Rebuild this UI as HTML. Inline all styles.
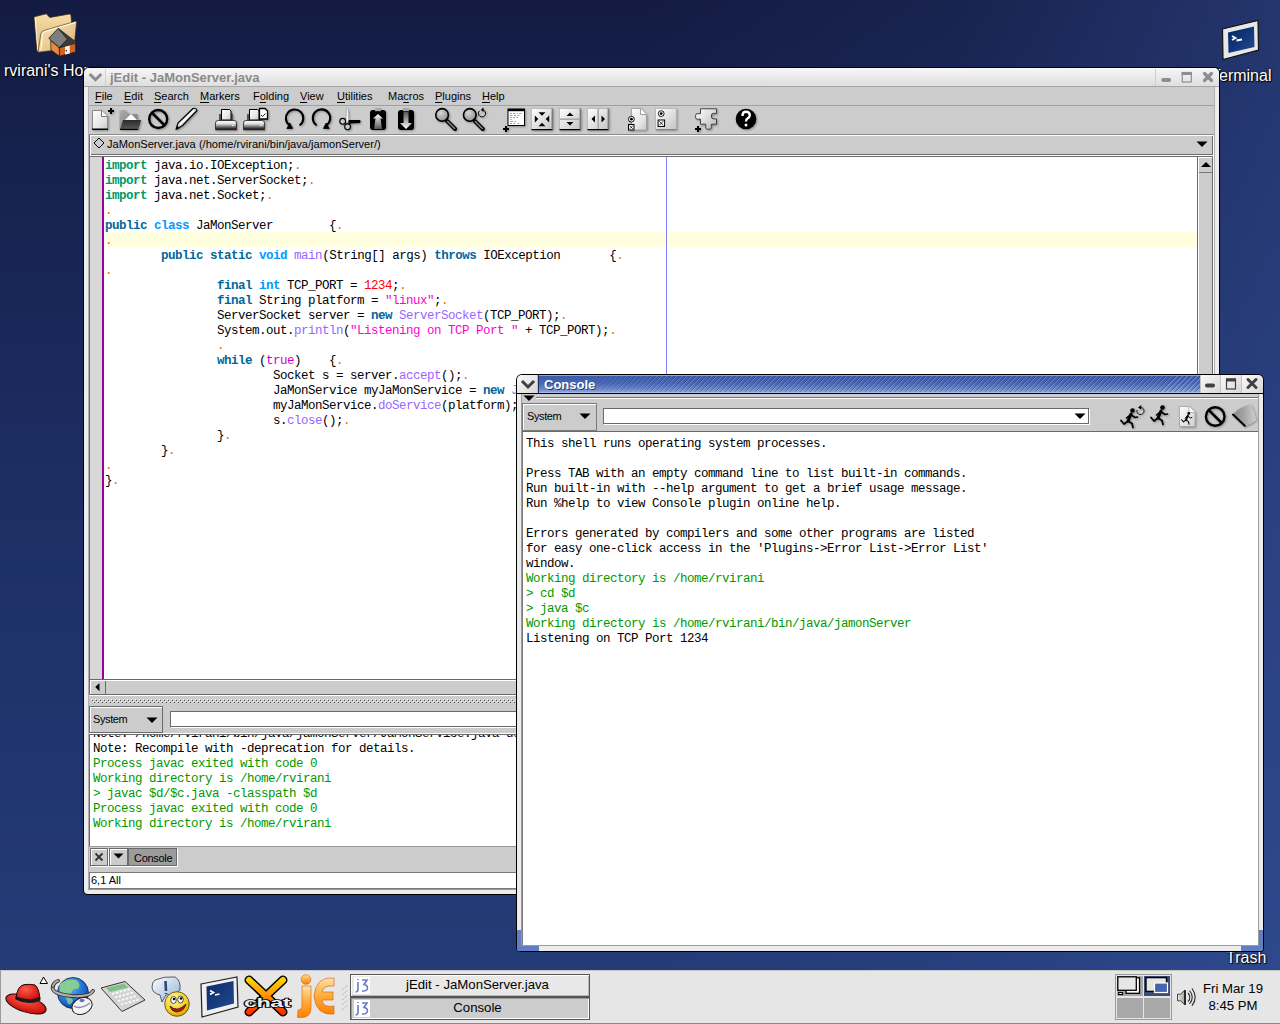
<!DOCTYPE html>
<html><head><meta charset="utf-8"><style>
*{box-sizing:border-box;margin:0;padding:0}
html,body{width:1280px;height:1024px;overflow:hidden}
body{position:relative;font-family:"Liberation Sans",sans-serif;background:linear-gradient(to right,rgba(60,90,170,0) 50%,rgba(60,90,170,0.12) 75%,rgba(60,90,170,0.42) 100%),linear-gradient(#131b42 0%,#1c2d62 45%,#253d7a 100%)}
.a{position:absolute}
.mono{position:absolute;font-family:"Liberation Mono",monospace;font-size:12.5px;letter-spacing:-0.5px;line-height:15px;white-space:pre;color:#000}
.dl{position:absolute;color:#fff;font-size:16px;line-height:18px;text-shadow:1px 1px 1px #000,0 0 2px #000;white-space:nowrap}
.ui{position:absolute;font-size:11px;color:#000;white-space:nowrap;line-height:14px}
.ui u{text-decoration:underline;text-underline-offset:2px}
.k1{color:#006699;font-weight:bold}
.k2{color:#009966;font-weight:bold}
.k3{color:#0099ff;font-weight:bold}
.fn{color:#9966ff}
.lit{color:#ff00cc}
.lit2{color:#cc00cc}
.dg{color:#ff0000}
.ws{color:#ff6600}
.gr{color:#009900}
svg{position:absolute;overflow:visible}
</style></head><body>
<div class="dl" style="left:4px;top:62px">rvirani's Home</div>
<div class="dl" style="left:1211px;top:67px">Terminal</div>
<div class="dl" style="left:1226px;top:949px;font-size:16px">Trash</div>
<svg style="left:0;top:0" width="1280" height="1024" viewBox="0 0 1280 1024"><defs><linearGradient id="gFold" x1="0" y1="0" x2="0" y2="1"><stop offset="0" stop-color="#f8dfa8"/><stop offset="1" stop-color="#d8b070"/></linearGradient><linearGradient id="gFold2" x1="0" y1="0" x2="1" y2="1"><stop offset="0" stop-color="#fbe6b8"/><stop offset="1" stop-color="#d9b276"/></linearGradient></defs><path d="M34 16.8 L46.3 13.8 L49.8 17.4 L69.5 14 Q70.8 14 71 15.5 L72 27 L40 52 Q37 53 36.8 50 Z" fill="url(#gFold)" stroke="#3a2a10" stroke-width="0.8" stroke-linejoin="round"/><path d="M35.2 18 L37.8 50.5" stroke="#fff" stroke-width="0.9" opacity="0.9"/><path d="M38 52.3 L40.8 34 Q41.2 31 44 30.5 L75.5 21.3 Q76.7 21.2 76.5 22.5 L74.5 42 L52 50.5 Z" fill="url(#gFold2)" stroke="#4a3410" stroke-width="0.6" stroke-linejoin="round"/><path d="M41 50 L42.5 34 Q43 32 45 31.6 L75.5 22.5" fill="none" stroke="#fff" stroke-width="1"/><path d="M50.6 40.6 L59.3 47.8 L59.5 56.2 L51 50 Z" fill="#e88a44" stroke="#2a1400" stroke-width="0.7" stroke-linejoin="round"/><path d="M59.3 47.8 L75.6 42 L75.6 52 L59.5 56.2 Z" fill="#cc6424" stroke="#2a1400" stroke-width="0.7" stroke-linejoin="round"/><path d="M58.3 28.3 L48.8 38.3 L59.3 47.6 L67.5 39.3 Z" fill="#7e7e7e" stroke="#1a1a1a" stroke-width="0.8" stroke-linejoin="round"/><path d="M58.3 28.3 L76.8 42.6 L75.6 43.4 L59.3 47.6 L67.5 39.3 Z" fill="#3a3a3a" stroke="#1a1a1a" stroke-width="0.6" stroke-linejoin="round"/><path d="M65 46.7 L69.8 45.6 L69.8 53.4 L65 54.6 Z" fill="#f0f0f0"/><circle cx="66.3" cy="50.8" r="0.7" fill="#000"/><g transform="translate(1222,20)"><path d="M0.5 9 L36 0.5 L36.5 30 L1 39.5 Z" fill="#e8e8e8" stroke="#111" stroke-width="1.2"/><path d="M6 12.5 L32 6.5 L32.5 27 L6.5 33 Z" fill="url(#gScr2)"/><path d="M10 16 L13.5 18 L10 20 M14.5 20.5 L20 19.5" stroke="#fff" stroke-width="1.8" fill="none"/></g><defs><linearGradient id="gScr2" x1="0" y1="0" x2="1" y2="1"><stop offset="0" stop-color="#08275e"/><stop offset="0.5" stop-color="#12357a"/><stop offset="1" stop-color="#244c92"/></linearGradient></defs></svg>
<div class="a" style="left:83px;top:67px;width:1137px;height:828px;background:#000;border-radius:6px 6px 0 5px"></div>
<div class="a" style="left:84px;top:68px;width:1135px;height:826px;background:#ededed;border-radius:5px 5px 0 4px"></div>
<div class="a" style="left:84px;top:68px;width:1135px;height:18px;background:linear-gradient(#f7f7f7,#dedede);border-radius:5px 5px 0 0"></div>
<div class="a" style="left:84px;top:86px;width:1135px;height:1px;background:#a6a6a6"></div>
<div class="a" style="left:105px;top:69px;width:1px;height:17px;background:#cfcfcf"></div>
<div class="a" style="left:1155px;top:69px;width:1px;height:17px;background:#cfcfcf"></div>
<div class="a" style="left:110px;top:70px;font-weight:bold;font-size:13px;line-height:16px;color:#8a8a8a;white-space:nowrap">jEdit - JaMonServer.java</div>
<svg style="left:89px;top:73px" width="14" height="10" viewBox="0 0 14 10"><path d="M1.8 2 L6.5 6.7 L11.2 2" stroke="#8c8c8c" stroke-width="3" fill="none" stroke-linecap="square"/></svg>
<svg style="left:1160px;top:72px" width="58" height="14" viewBox="0 0 58 14"><rect x="1.2" y="6" width="10" height="4" rx="2" fill="#8e8e8e"/><rect x="22.3" y="0.5" width="9" height="9.5" fill="none" stroke="#8e8e8e" stroke-width="1.2"/><rect x="21.7" y="0" width="10.2" height="3" fill="#8e8e8e"/><path d="M44.5 1.5 L51.5 8.5 M51.5 1.5 L44.5 8.5" stroke="#8e8e8e" stroke-width="3.2" stroke-linecap="round"/></svg>
<div class="a" style="left:88px;top:87px;width:1px;height:803px;background:#b0b0b0"></div>
<div class="a" style="left:1214px;top:87px;width:1px;height:803px;background:#b0b0b0"></div>
<div class="a" style="left:89px;top:87px;width:1125px;height:802px;background:#cccccc"></div>
<div class="a" style="left:88px;top:889px;width:1127px;height:1px;background:#9a9a9a"></div>
<div class="ui" style="left:95px;top:89px;"><u>F</u>ile</div>
<div class="ui" style="left:124px;top:89px;"><u>E</u>dit</div>
<div class="ui" style="left:154px;top:89px;"><u>S</u>earch</div>
<div class="ui" style="left:200px;top:89px;"><u>M</u>arkers</div>
<div class="ui" style="left:253px;top:89px;">F<u>o</u>lding</div>
<div class="ui" style="left:300px;top:89px;"><u>V</u>iew</div>
<div class="ui" style="left:337px;top:89px;"><u>U</u>tilities</div>
<div class="ui" style="left:388px;top:89px;">Ma<u>c</u>ros</div>
<div class="ui" style="left:435px;top:89px;"><u>P</u>lugins</div>
<div class="ui" style="left:482px;top:89px;"><u>H</u>elp</div>
<div class="a" style="left:89px;top:105px;width:1125px;height:1px;background:#a0a0a0"></div>
<svg style="left:0;top:0" width="1280" height="1024" viewBox="0 0 1280 1024"><defs><linearGradient id="gPage" x1="0" y1="0" x2="1" y2="1"><stop offset="0" stop-color="#ffffff"/><stop offset="0.6" stop-color="#e6e6e6"/><stop offset="1" stop-color="#c8c8c8"/></linearGradient><linearGradient id="gDark" x1="0" y1="0" x2="0" y2="1"><stop offset="0" stop-color="#2a2a2a"/><stop offset="1" stop-color="#5a5a5a"/></linearGradient><linearGradient id="gBack" x1="0" y1="0" x2="1" y2="1"><stop offset="0" stop-color="#b0b0b0"/><stop offset="1" stop-color="#707070"/></linearGradient><linearGradient id="gBase" x1="0" y1="0" x2="0" y2="1"><stop offset="0" stop-color="#ffffff"/><stop offset="0.35" stop-color="#e0e0e0"/><stop offset="1" stop-color="#000000"/></linearGradient><linearGradient id="gArrUp" x1="0" y1="0" x2="0" y2="1"><stop offset="0" stop-color="#ffffff"/><stop offset="1" stop-color="#555555"/></linearGradient><linearGradient id="gArrDn" x1="0" y1="0" x2="0" y2="1"><stop offset="0" stop-color="#555555"/><stop offset="1" stop-color="#ffffff"/></linearGradient><linearGradient id="gBtn" x1="0" y1="0" x2="1" y2="1"><stop offset="0" stop-color="#ffffff"/><stop offset="1" stop-color="#c4c4c4"/></linearGradient><radialGradient id="gLens" cx="0.4" cy="0.35" r="0.7"><stop offset="0" stop-color="#d8d8d8"/><stop offset="1" stop-color="#8a8a8a"/></radialGradient><linearGradient id="gPuz" x1="0" y1="0" x2="1" y2="1"><stop offset="0" stop-color="#ffffff"/><stop offset="1" stop-color="#b8b8b8"/></linearGradient><filter id="sh" x="-20%" y="-20%" width="150%" height="150%"><feGaussianBlur in="SourceAlpha" stdDeviation="0.8"/><feOffset dx="1" dy="1"/><feComponentTransfer><feFuncA type="linear" slope="0.35"/></feComponentTransfer><feMerge><feMergeNode/><feMergeNode in="SourceGraphic"/></feMerge></filter></defs><g filter="url(#sh)"><path d="M92.5 110.5 H101.5 L107.5 116.5 V129.5 H92.5 Z" fill="url(#gPage)" stroke="#8a8a8a" stroke-width="1"/><path d="M101.5 110.5 V116.5 H107.5" fill="#fff" stroke="#777" stroke-width="1"/><rect x="92" y="128.5" width="16" height="1.5" fill="#000"/><path d="M111 108 V114 M108 111 H114" stroke="#000" stroke-width="2"/><path d="M119.5 110 H125 L129 114 H137.5 V129.5 H119.5 Z" fill="url(#gBack)"/><path d="M125 120 L131 114 L137 120 Z" fill="#fff"/><path d="M123 120 H141 L138.5 129.5 H120 Z" fill="url(#gDark)"/><rect x="120" y="128.8" width="18" height="1.2" fill="#000"/><circle cx="158.2" cy="119" r="9" fill="none" stroke="#000" stroke-width="2.4"/><path d="M151.8 112.6 L164.6 125.4" stroke="#000" stroke-width="2.6"/><path d="M176 129.5 L178 123 L193 108.5 Q196 107.5 197 110.5 L182.5 125.5 Z" fill="#d8d8d8" stroke="#000" stroke-width="1.1" stroke-linejoin="round"/><path d="M180 124.5 L194 110.5" stroke="#fff" stroke-width="1.5"/><path d="M176 129.5 L177.2 125.6 L179.6 128.2 Z" fill="#000"/><rect x="219" y="114" width="14" height="7" fill="#555"/><path d="M221.5 109.5 H229.5 L231 111 V120 H221.5 Z" fill="url(#gPage)" stroke="#000" stroke-width="1"/><path d="M215.5 123 Q215.5 120.5 218 120.5 H234 Q236.5 120.5 236.5 123 V129.8 H215.5 Z" fill="url(#gBase)" stroke="#222" stroke-width="0.8"/><circle cx="233" cy="125.5" r="0.8" fill="#fff"/><rect x="247" y="114" width="14" height="7" fill="#555"/><path d="M249.5 109.5 H257.5 L259 111 V120 H249.5 Z" fill="url(#gPage)" stroke="#000" stroke-width="1"/><path d="M243.5 123 Q243.5 120.5 246 120.5 H262 Q264.5 120.5 264.5 123 V129.8 H243.5 Z" fill="url(#gBase)" stroke="#222" stroke-width="0.8"/><circle cx="261" cy="125.5" r="0.8" fill="#fff"/><path d="M259.5 108.5 H265 L267.5 111 V119 H259.5 Z" fill="#fff" stroke="#000" stroke-width="1.3"/><path d="M261 115 L262.5 116.5 L265.5 113.5" fill="none" stroke="#000" stroke-width="0.9"/><path d="M300.2 124.8 A8.7 8.7 0 1 0 289.2 125" fill="none" stroke="#000" stroke-width="2.1" stroke-linecap="round"/><path d="M289.8 123 L286.8 128.6 L292.6 128.4 Z" fill="#000" stroke="#000" stroke-width="0.8" stroke-linejoin="round"/><path d="M316 124.8 A8.7 8.7 0 1 1 326.8 125" fill="none" stroke="#000" stroke-width="2.1" stroke-linecap="round"/><path d="M326.2 123 L329.2 128.6 L323.4 128.4 Z" fill="#000" stroke="#000" stroke-width="0.8" stroke-linejoin="round"/><path d="M346 122 L346.5 108.8 Q347.3 108 348 108.8 L348.8 122 Z" fill="#fff" stroke="#999" stroke-width="0.6"/><path d="M348.5 120 H360 Q361.3 121.2 360 123 L352 123.5 L348.5 124 Z" fill="#000"/><circle cx="342.7" cy="121.3" r="2.9" fill="#c8c8c8" stroke="#000" stroke-width="1.1"/><circle cx="347.6" cy="126.8" r="2.9" fill="#c8c8c8" stroke="#000" stroke-width="1.1"/><rect x="370" y="110" width="16" height="20" rx="3" fill="#000"/><rect x="375" y="108" width="6" height="3.2" fill="#a8a8a8"/><path d="M378 114 L383 118.5 H380.5 L382 129 H374 L375.5 118.5 H373 Z" fill="url(#gArrUp)"/><rect x="398" y="110" width="16" height="20" rx="3" fill="#000"/><rect x="403" y="108" width="6" height="3.2" fill="#a8a8a8"/><path d="M403.5 112 H408.5 L408.5 123 H412 L406 129 L400 123 H403.5 Z" fill="url(#gArrDn)"/><path d="M447.1 121 L455.1 129" stroke="#000" stroke-width="4" stroke-linecap="round"/><path d="M447.6 121.5 L454.6 128.5" stroke="#888" stroke-width="1.6" stroke-linecap="round"/><circle cx="442.1" cy="114.9" r="6.3" fill="url(#gLens)" stroke="#000" stroke-width="1.6"/><path d="M474.8 121 L482.8 129" stroke="#000" stroke-width="4" stroke-linecap="round"/><path d="M475.3 121.5 L482.3 128.5" stroke="#888" stroke-width="1.6" stroke-linecap="round"/><circle cx="469.8" cy="114.9" r="6.3" fill="url(#gLens)" stroke="#000" stroke-width="1.6"/><path d="M479.5 110.8 A3.6 3.6 0 1 0 482.5 109.8" fill="none" stroke="#000" stroke-width="1"/><path d="M483.5 107.5 L480.8 109.8 L483.5 112 Z" fill="#000"/><rect x="508" y="109" width="16.5" height="16.5" fill="#fff" stroke="#000" stroke-width="1"/><rect x="508" y="109" width="16.5" height="2.2" fill="#000"/><g stroke="#999" stroke-width="0.9"><path d="M510 113.5 H512 M513 113.5 H515.5 M517 113.5 H518 M519 113.5 H521.5 M510 115.5 H512.5 M514 115.5 H516 M517.5 115.5 H519.5 M510 117.5 H512 M513 117.5 H515 M516.5 117.5 H518 M510 119.5 H511.5 M510 121.5 H513 M514.5 121.5 H516 M510 123.5 H512 M513 123.5 H515 M517.5 123.5 H519.5"/></g><path d="M506 126 V132 M503 129 H509" stroke="#000" stroke-width="2"/><rect x="531.5" y="108.5" width="21" height="21" fill="url(#gBtn)" stroke="#aaa" stroke-width="0.6"/><rect x="531.5" y="129" width="21" height="1.2" fill="#000"/><rect x="551.7" y="108.5" width="0.9" height="21.5" fill="#555"/><path d="M538.5 112.3 H545.5 L542 115.8 Z M538.5 126.3 H545.5 L542 122.8 Z M534.8 115.5 V122.5 L538.3 119 Z M549.2 115.5 V122.5 L545.7 119 Z" fill="#000"/><rect x="559.5" y="108.5" width="21" height="21" fill="url(#gBtn)" stroke="#aaa" stroke-width="0.6"/><rect x="559.5" y="129" width="21" height="1.2" fill="#000"/><rect x="579.7" y="108.5" width="0.9" height="21.5" fill="#555"/><rect x="560" y="118.4" width="20" height="1.6" fill="#a8a8a8"/><path d="M566.5 116 H573.5 L570 112.5 Z M566.5 122 H573.5 L570 125.5 Z" fill="#000"/><rect x="587.5" y="108.5" width="21" height="21" fill="url(#gBtn)" stroke="#aaa" stroke-width="0.6"/><rect x="587.5" y="129" width="21" height="1.2" fill="#000"/><rect x="607.7" y="108.5" width="0.9" height="21.5" fill="#555"/><rect x="597.4" y="109" width="1.6" height="20" fill="#a8a8a8"/><path d="M595 115.5 V122.5 L591.5 119 Z M601.5 115.5 V122.5 L605 119 Z" fill="#000"/><path d="M631.5 108.5 H640.5 L646.5 114.5 V130 H631.5 Z" fill="url(#gPage)" stroke="#999" stroke-width="0.8"/><path d="M640.5 108.5 V114.5 H646.5" fill="#fff" stroke="#888" stroke-width="0.8"/><circle cx="631.4" cy="119.2" r="2.9" fill="#fff" stroke="#000" stroke-width="0.9"/><circle cx="631.4" cy="119.2" r="1.4" fill="#000"/><rect x="628" y="124" width="6.5" height="6.5" fill="#000"/><rect x="629" y="125" width="4.5" height="4.5" fill="#fff"/><path d="M629.6 125.6 L632.9 128.9 M632.9 125.6 L629.6 128.9" stroke="#000" stroke-width="0.7"/><rect x="655.7" y="108.5" width="20.5" height="21" fill="url(#gBtn)" stroke="#aaa" stroke-width="0.6"/><rect x="656" y="129.2" width="20.5" height="0.8" fill="#777"/><circle cx="661.2" cy="113.6" r="2.9" fill="#fff" stroke="#000" stroke-width="0.9"/><circle cx="661.2" cy="113.6" r="1.4" fill="#000"/><rect x="657.6" y="119.5" width="7.5" height="7.5" fill="#000"/><rect x="658.6" y="120.5" width="5.5" height="5.5" fill="#fff"/><path d="M659.3 121.2 L663.4 125.3 M663.4 121.2 L659.3 125.3" stroke="#000" stroke-width="0.8"/><path d="M700.5 108.8 H716.5 V113.4 H713.2 Q711.3 113.4 711.3 116.1 Q711.3 118.9 713.2 118.9 H716.5 V124.2 H711.3 V127.4 Q711.3 129.2 709.5 129.2 H707.6 Q705.8 129.2 705.8 127.4 V124.2 H700.5 V119.2 H697.3 Q695.6 119.2 695.6 117.4 V115.5 Q695.6 113.7 697.3 113.7 H700.5 Z" fill="url(#gPuz)" stroke="#333" stroke-width="0.9" stroke-linejoin="round"/><path d="M698 126 V132 M695 129 H701" stroke="#000" stroke-width="2"/><circle cx="746" cy="119" r="10.3" fill="#000"/><path d="M742.5 116 Q742.5 111.8 746 111.8 Q749.8 111.8 749.8 115.3 Q749.8 117.3 747.5 118.5 Q746 119.3 746 121.5" fill="none" stroke="#fff" stroke-width="2.4"/><circle cx="746" cy="125" r="1.5" fill="#fff"/></g></svg>
<div class="a" style="left:89px;top:134px;width:1125px;height:1px;background:#8a8a8a"></div>
<div class="a" style="left:89px;top:135px;width:1125px;height:21px;background:#fff"></div>
<div class="a" style="left:89px;top:135px;width:1px;height:21px;background:#6a6a6a"></div>
<div class="a" style="left:91px;top:136px;width:1122px;height:19px;background:#cccccc;border-right:1px solid #6a6a6a;border-bottom:1px solid #6a6a6a"></div>
<svg style="left:93px;top:137.3px" width="12" height="12" viewBox="0 0 12 12"><path d="M6 1 L11 6 L6 11 L1 6 Z" fill="none" stroke="#000" stroke-width="1"/></svg>
<div class="ui" style="left:107px;top:137px;font-size:11.1px">JaMonServer.java (/home/rvirani/bin/java/jamonServer/)</div>
<svg style="left:1196px;top:141px" width="12" height="7" viewBox="0 0 12 7"><path d="M0.5 0.5 L11.5 0.5 L6 6 Z" fill="#000"/></svg>
<div class="a" style="left:89px;top:156px;width:1125px;height:1px;background:#6a6a6a"></div>
<div class="a" style="left:89px;top:157px;width:1px;height:538px;background:#6a6a6a"></div>
<div class="a" style="left:90px;top:157px;width:12px;height:523px;background:#d8d8d8"></div>
<div class="a" style="left:102px;top:157px;width:2px;height:523px;background:#990099"></div>
<div class="a" style="left:104px;top:157px;width:1093px;height:523px;background:#ffffff"></div>
<div class="a" style="left:105px;top:232px;width:1092px;height:15px;background:#ffffe0"></div>
<div class="a" style="left:666px;top:157px;width:1px;height:523px;background:#8080ff"></div>
<div class="a" style="left:1197px;top:157px;width:1px;height:523px;background:#6a6a6a"></div>
<div class="a" style="left:1198px;top:157px;width:1px;height:523px;background:#fff"></div>
<div class="a" style="left:1199px;top:157px;width:13px;height:523px;background:#cccccc"></div>
<div class="a" style="left:1212px;top:157px;width:1px;height:523px;background:#6a6a6a"></div>
<div class="a" style="left:1213px;top:156px;width:1px;height:524px;background:#fff"></div>
<div class="a" style="left:1198px;top:157px;width:14px;height:1px;background:#fff"></div>
<div class="a" style="left:1199px;top:172px;width:13px;height:1px;background:#777"></div>
<svg style="left:1200.5px;top:161.5px" width="10" height="6" viewBox="0 0 10 6"><path d="M0 5 L10 5 L5 0 Z" fill="#000"/></svg>
<div class="a" style="left:89px;top:679px;width:1108px;height:1px;background:#6a6a6a"></div>
<div class="a" style="left:90px;top:680px;width:1107px;height:1px;background:#fff"></div>
<div class="a" style="left:90px;top:681px;width:1px;height:13px;background:#fff"></div>
<div class="a" style="left:91px;top:681px;width:14px;height:13px;background:#cccccc"></div>
<div class="a" style="left:105px;top:681px;width:1px;height:13px;background:#6a6a6a"></div>
<div class="a" style="left:106px;top:681px;width:1091px;height:13px;background:#cccccc"></div>
<svg style="left:94.5px;top:682.8px" width="5" height="8.5" viewBox="0 0 5 8.5"><path d="M4.5 0 L4.5 8.2 L0.2 4.1 Z" fill="#000"/></svg>
<div class="a" style="left:89px;top:694px;width:1125px;height:1px;background:#6a6a6a"></div>
<div class="a" style="left:89px;top:695px;width:1125px;height:12px;background:#cccccc"></div>
<div class="a" style="left:89px;top:695px;width:1125px;height:1px;background:#fff"></div>
<svg style="left:91px;top:699px" width="1120" height="4"><defs><pattern id="pDot" width="4" height="4" patternUnits="userSpaceOnUse"><rect x="0" y="0" width="1" height="1" fill="#fff"/><rect x="1" y="1" width="1" height="1" fill="#555"/><rect x="2" y="2" width="1" height="1" fill="#fff"/><rect x="3" y="3" width="1" height="1" fill="#555"/></pattern></defs><rect width="1120" height="4" fill="url(#pDot)"/></svg>
<div class="mono code" style="left:105px;top:159px"><span class="k2">import</span> java.io.IOException;<span class="ws">.</span></div>
<div class="mono code" style="left:105px;top:174px"><span class="k2">import</span> java.net.ServerSocket;<span class="ws">.</span></div>
<div class="mono code" style="left:105px;top:189px"><span class="k2">import</span> java.net.Socket;<span class="ws">.</span></div>
<div class="mono code" style="left:105px;top:204px"><span class="ws">.</span></div>
<div class="mono code" style="left:105px;top:219px"><span class="k1">public</span> <span class="k3">class</span> JaMonServer        {<span class="ws">.</span></div>
<div class="mono code" style="left:105px;top:234px"><span class="ws">.</span></div>
<div class="mono code" style="left:105px;top:249px">        <span class="k1">public</span> <span class="k1">static</span> <span class="k3">void</span> <span class="fn">main</span>(String[] args) <span class="k1">throws</span> IOException       {<span class="ws">.</span></div>
<div class="mono code" style="left:105px;top:264px"><span class="ws">.</span></div>
<div class="mono code" style="left:105px;top:279px">                <span class="k1">final</span> <span class="k3">int</span> TCP_PORT = <span class="dg">1234</span>;<span class="ws">.</span></div>
<div class="mono code" style="left:105px;top:294px">                <span class="k1">final</span> String platform = <span class="lit">"linux"</span>;<span class="ws">.</span></div>
<div class="mono code" style="left:105px;top:309px">                ServerSocket server = <span class="k1">new</span> <span class="fn">ServerSocket</span>(TCP_PORT);<span class="ws">.</span></div>
<div class="mono code" style="left:105px;top:324px">                System.out.<span class="fn">println</span>(<span class="lit">"Listening on TCP Port "</span> + TCP_PORT);<span class="ws">.</span></div>
<div class="mono code" style="left:105px;top:339px">                <span class="ws">.</span></div>
<div class="mono code" style="left:105px;top:354px">                <span class="k1">while</span> (<span class="lit2">true</span>)    {<span class="ws">.</span></div>
<div class="mono code" style="left:105px;top:369px">                        Socket s = server.<span class="fn">accept</span>();<span class="ws">.</span></div>
<div class="mono code" style="left:105px;top:384px">                        JaMonService myJaMonService = <span class="k1">new</span> <span class="fn">JaMonService</span>();<span class="ws">.</span></div>
<div class="mono code" style="left:105px;top:399px">                        myJaMonService.<span class="fn">doService</span>(platform);<span class="ws">.</span></div>
<div class="mono code" style="left:105px;top:414px">                        s.<span class="fn">close</span>();<span class="ws">.</span></div>
<div class="mono code" style="left:105px;top:429px">                }<span class="ws">.</span></div>
<div class="mono code" style="left:105px;top:444px">        }<span class="ws">.</span></div>
<div class="mono code" style="left:105px;top:459px"><span class="ws">.</span></div>
<div class="mono code" style="left:105px;top:474px">}<span class="ws">.</span></div>
<div class="a" style="left:89px;top:706px;width:74px;height:27px;background:#cccccc;border:1px solid #6a6a6a;box-shadow:inset 1px 1px 0 #fff"></div>
<div class="ui" style="left:93px;top:712px;letter-spacing:-0.4px">System</div>
<svg style="left:145.5px;top:716.5px" width="12" height="7" viewBox="0 0 12 7"><path d="M0.5 0.5 L11.5 0.5 L6 6 Z" fill="#000"/></svg>
<div class="a" style="left:170px;top:711px;width:1044px;height:17px;background:#fff;border-top:1px solid #6a6a6a;border-left:1px solid #6a6a6a;border-bottom:1px solid #fff;box-shadow:inset 0 -1px 0 #6a6a6a"></div>
<div class="a" style="left:89px;top:733px;width:1125px;height:1px;background:#fff"></div>
<div class="a" style="left:89px;top:734px;width:1125px;height:1px;background:#6a6a6a"></div>
<div class="a" style="left:89px;top:735px;width:1125px;height:111px;background:#fff;border-left:1px solid #6a6a6a"></div>
<div class="a" style="left:90px;top:735px;width:1120px;height:111px;overflow:hidden">
<div class="mono code" style="left:3px;top:-8px;color:#000">Note: /home/rvirani/bin/java/jamonServer/JaMonService.java uses or overrides a deprecated API.</div>
<div class="mono code" style="left:3px;top:7px;color:#000">Note: Recompile with -deprecation for details.</div>
<div class="mono code" style="left:3px;top:22px;color:#009900">Process javac exited with code 0</div>
<div class="mono code" style="left:3px;top:37px;color:#009900">Working directory is /home/rvirani</div>
<div class="mono code" style="left:3px;top:52px;color:#009900">&gt; javac $d/$c.java -classpath $d</div>
<div class="mono code" style="left:3px;top:67px;color:#009900">Process javac exited with code 0</div>
<div class="mono code" style="left:3px;top:82px;color:#009900">Working directory is /home/rvirani</div>
</div>
<div class="a" style="left:89px;top:846px;width:1125px;height:1px;background:#9a9a9a"></div>
<div class="a" style="left:89px;top:847px;width:1125px;height:25px;background:#cccccc"></div>
<div class="a" style="left:90px;top:848px;width:18px;height:18px;background:#cccccc;border:1px solid #6a6a6a;box-shadow:inset 1px 1px 0 #fff, 1px 1px 0 #fff"></div>
<svg style="left:94px;top:852px" width="10" height="10" viewBox="0 0 10 10"><path d="M1.5 1.5 L8.5 8.5 M8.5 1.5 L1.5 8.5" stroke="#333" stroke-width="1.8"/></svg>
<div class="a" style="left:109px;top:848px;width:19px;height:18px;background:#cccccc;border:1px solid #6a6a6a;box-shadow:inset 1px 1px 0 #fff, 1px 1px 0 #fff"></div>
<svg style="left:113px;top:853px" width="11" height="6" viewBox="0 0 11 6"><path d="M0.5 0.5 L10.5 0.5 L5.5 5.5 Z" fill="#000"/></svg>
<div class="a" style="left:128px;top:848px;width:49px;height:18px;background:#9c9c9c;border:1px solid #6a6a6a;box-shadow:1px 1px 0 #fff"></div>
<div class="ui" style="left:134px;top:851px;font-size:11px;letter-spacing:-0.3px">Console</div>
<div class="a" style="left:89px;top:872px;width:1125px;height:17px;background:#fff;border-top:1px solid #7a7a7a;border-left:1px solid #7a7a7a;border-bottom:1px solid #7a7a7a"></div>
<div class="ui" style="left:91px;top:873px;">6,1 All</div>
<div class="a" style="left:516px;top:374px;width:748px;height:578px;background:#000;border-radius:6px 6px 4px 5px"></div>
<div class="a" style="left:517px;top:375px;width:746px;height:576px;background:#ececec;border-radius:5px 5px 3px 4px"></div>
<div class="a" style="left:538px;top:375px;width:662px;height:18px;background:linear-gradient(#8aa4e0 0px,#8aa4e0 1px,#3d5cab 1px,#4565b5 8px,#6a86c6 14px,#8aa2d8 17px,#a8bcec 17px);overflow:hidden"><div class="a" style="left:0;top:0;width:1px;height:18px;background:#1c2c60"></div><div class="a" style="left:52px;top:1px;width:610px;height:16px;-webkit-mask-image:linear-gradient(to right,transparent 0px,rgba(0,0,0,0.5) 20px,#000 110px);mask-image:linear-gradient(to right,transparent 0px,rgba(0,0,0,0.5) 20px,#000 110px);background-position:-52px 0;background:repeating-linear-gradient(135deg,rgba(20,30,80,0.32) 0px,rgba(20,30,80,0.32) 0.8px,rgba(200,215,255,0.28) 0.8px,rgba(200,215,255,0.28) 1.6px,rgba(0,0,0,0) 1.6px,rgba(0,0,0,0) 3.54px)"></div></div>
<div class="a" style="left:544px;top:377px;font-weight:bold;font-size:13px;line-height:16px;color:#fff;white-space:nowrap;text-shadow:1px 1px 0 #2a3f70">Console</div>
<div class="a" style="left:517px;top:375px;width:21px;height:18px;background:linear-gradient(135deg,#fafafa,#d8d8d8);border-radius:5px 0 0 0;border-right:1px solid #bdbdbd"></div>
<svg style="left:521px;top:380px" width="14" height="10" viewBox="0 0 14 10"><path d="M2 2 L7 7 L12 2" stroke="#404040" stroke-width="3" fill="none" stroke-linecap="square"/></svg>
<div class="a" style="left:1200px;top:375px;width:20px;height:18px;background:linear-gradient(135deg,#fafafa,#d6d6d6);border-left:1px solid #c4c4c4;"></div>
<div class="a" style="left:1220px;top:375px;width:21px;height:18px;background:linear-gradient(135deg,#fafafa,#d6d6d6);border-left:1px solid #c4c4c4;"></div>
<div class="a" style="left:1241px;top:375px;width:22px;height:18px;background:linear-gradient(135deg,#fafafa,#d6d6d6);border-left:1px solid #c4c4c4;border-radius:0 5px 0 0;"></div>
<svg style="left:1200px;top:375px" width="63" height="18" viewBox="0 0 63 18"><rect x="5" y="8.5" width="10" height="4" rx="2" fill="#404040"/><rect x="26.5" y="4" width="9" height="10" fill="none" stroke="#404040" stroke-width="1.2"/><rect x="26" y="3.5" width="10" height="3" fill="#404040"/><path d="M48 4.5 L56 12.5 M56 4.5 L48 12.5" stroke="#404040" stroke-width="3" stroke-linecap="round"/></svg>
<div class="a" style="left:516px;top:393px;width:748px;height:1px;background:#000"></div>
<div class="a" style="left:521px;top:394px;width:1px;height:552px;background:#9a9a9a"></div>
<div class="a" style="left:1258px;top:394px;width:1px;height:552px;background:#9a9a9a"></div>
<div class="a" style="left:522px;top:394px;width:736px;height:551px;background:#cccccc"></div>
<div class="a" style="left:521px;top:945px;width:738px;height:1px;background:#9a9a9a"></div>
<div class="a" style="left:517px;top:930px;width:4px;height:21px;background:#5f7ec4;border-radius:0 0 0 3px"></div>
<div class="a" style="left:517px;top:946px;width:22px;height:5px;background:#5f7ec4;border-radius:0 0 0 3px"></div>
<div class="a" style="left:1259px;top:930px;width:4px;height:21px;background:#5f7ec4;border-radius:0 0 4px 0"></div>
<div class="a" style="left:1241px;top:946px;width:22px;height:5px;background:#5f7ec4;border-radius:0 0 4px 0"></div>
<svg style="left:523px;top:395px" width="12" height="7" viewBox="0 0 12 7"><path d="M0.5 0.5 L11.5 0.5 L6 6 Z" fill="#000"/></svg>
<div class="a" style="left:536px;top:397px;width:722px;height:1px;background:#6a6aa8"></div>
<div class="a" style="left:536px;top:398px;width:722px;height:1px;background:#fff"></div>
<div class="a" style="left:522px;top:403px;width:75px;height:28px;background:#cccccc;border:1px solid #7a7a7a;box-shadow:inset 1px 1px 0 #fff"></div>
<div class="ui" style="left:527px;top:409px;letter-spacing:-0.4px">System</div>
<svg style="left:579px;top:413px" width="12" height="7" viewBox="0 0 12 7"><path d="M0.5 0.5 L11.5 0.5 L6 6 Z" fill="#000"/></svg>
<div class="a" style="left:603px;top:408px;width:487px;height:17px;background:#fff;border-top:1px solid #6a6a6a;border-left:1px solid #6a6a6a;border-bottom:1px solid #fff;border-right:1px solid #fff;box-shadow:inset -1px -1px 0 #6a6a6a"></div>
<svg style="left:1074px;top:413px" width="12" height="7" viewBox="0 0 12 7"><path d="M0.5 0.5 L11.5 0.5 L6 6 Z" fill="#000"/></svg>
<svg style="left:0;top:0" width="1280" height="1024" viewBox="0 0 1280 1024"><defs><radialGradient id="gFan" cx="0" cy="1" r="1"><stop offset="0" stop-color="#707070"/><stop offset="0.7" stop-color="#a8a8a8"/><stop offset="1" stop-color="#cccccc"/></radialGradient><linearGradient id="gDoc2" x1="0" y1="0" x2="1" y2="1"><stop offset="0" stop-color="#fff"/><stop offset="1" stop-color="#cfcfcf"/></linearGradient></defs><g filter="url(#sh)"><g transform="translate(1120,408) scale(1.0)" fill="none" stroke="#000" stroke-linecap="round" stroke-linejoin="round"><circle cx="12.5" cy="2.5" r="2.3" fill="#000" stroke="none"/><path d="M11 6 L8 13" stroke-width="3"/><path d="M10.5 6.5 L15 9.5 L17.5 9" stroke-width="1.6"/><path d="M10 7 L6.5 10" stroke-width="1.6"/><path d="M8 13 L12 15.5 L13 19.5" stroke-width="1.8"/><path d="M8 13 L4 16 L1 12.5" stroke-width="1.8"/></g><path d="M1137 410 A3.6 3.6 0 1 0 1140.2 407.4" fill="none" stroke="#000" stroke-width="0.9"/><path d="M1141.2 405 L1138 407.4 L1141.2 409.6 Z" fill="#000"/><g transform="translate(1150,405) scale(1.0)" fill="none" stroke="#000" stroke-linecap="round" stroke-linejoin="round"><circle cx="12.5" cy="2.5" r="2.3" fill="#000" stroke="none"/><path d="M11 6 L8 13" stroke-width="3"/><path d="M10.5 6.5 L15 9.5 L17.5 9" stroke-width="1.6"/><path d="M10 7 L6.5 10" stroke-width="1.6"/><path d="M8 13 L12 15.5 L13 19.5" stroke-width="1.8"/><path d="M8 13 L4 16 L1 12.5" stroke-width="1.8"/></g><path d="M1179.5 406.5 H1189 L1195 412.5 V426.5 H1179.5 Z" fill="url(#gDoc2)" stroke="#999" stroke-width="0.7"/><path d="M1189 406.5 V412.5 H1195" fill="#fff" stroke="#999" stroke-width="0.7"/><g transform="translate(1181,412) scale(0.62)" fill="none" stroke="#000" stroke-linecap="round" stroke-linejoin="round"><circle cx="12.5" cy="2.5" r="2.3" fill="#000" stroke="none"/><path d="M11 6 L8 13" stroke-width="3"/><path d="M10.5 6.5 L15 9.5 L17.5 9" stroke-width="1.6"/><path d="M10 7 L6.5 10" stroke-width="1.6"/><path d="M8 13 L12 15.5 L13 19.5" stroke-width="1.8"/><path d="M8 13 L4 16 L1 12.5" stroke-width="1.8"/></g><circle cx="1215.2" cy="416.5" r="9.3" fill="none" stroke="#000" stroke-width="2.4"/><path d="M1208.6 409.9 L1221.8 423.1" stroke="#000" stroke-width="2.6"/><defs><linearGradient id="gFan2" x1="0" y1="0" x2="1" y2="0"><stop offset="0" stop-color="#888"/><stop offset="0.5" stop-color="#a6a6a6"/><stop offset="1" stop-color="#cfcfcf"/></linearGradient></defs><path d="M1233 414.5 Q1240 406 1251 404.5 Q1255 412 1256 420 Q1251 424 1245 426 Z" fill="url(#gFan2)" stroke="none"/><path d="M1233 414.6 L1244.8 425.8" stroke="#000" stroke-width="2" stroke-linecap="round"/></g></svg>
<div class="a" style="left:522px;top:431px;width:736px;height:1px;background:#6a6a6a"></div>
<div class="a" style="left:522px;top:432px;width:736px;height:513px;background:#fff;border-left:1px solid #7a7a7a"></div>
<div class="mono" style="left:526px;top:437px;color:#000">This shell runs operating system processes.</div>
<div class="mono" style="left:526px;top:452px;color:#000"></div>
<div class="mono" style="left:526px;top:467px;color:#000">Press TAB with an empty command line to list built-in commands.</div>
<div class="mono" style="left:526px;top:482px;color:#000">Run built-in with --help argument to get a brief usage message.</div>
<div class="mono" style="left:526px;top:497px;color:#000">Run %help to view Console plugin online help.</div>
<div class="mono" style="left:526px;top:512px;color:#000"></div>
<div class="mono" style="left:526px;top:527px;color:#000">Errors generated by compilers and some other programs are listed</div>
<div class="mono" style="left:526px;top:542px;color:#000">for easy one-click access in the 'Plugins-&gt;Error List-&gt;Error List'</div>
<div class="mono" style="left:526px;top:557px;color:#000">window.</div>
<div class="mono" style="left:526px;top:572px;color:#009900">Working directory is /home/rvirani</div>
<div class="mono" style="left:526px;top:587px;color:#009900">&gt; cd $d</div>
<div class="mono" style="left:526px;top:602px;color:#009900">&gt; java $c</div>
<div class="mono" style="left:526px;top:617px;color:#009900">Working directory is /home/rvirani/bin/java/jamonServer</div>
<div class="mono" style="left:526px;top:632px;color:#000">Listening on TCP Port 1234</div>
<div class="a" style="left:0px;top:970px;width:1280px;height:54px;background:#e6e6e6;border-top:1px solid #c8c8c8;border-left:1px solid #9a9a9a;border-bottom:1px solid #8a8a8a"></div>
<svg style="left:0;top:0" width="1280" height="1024" viewBox="0 0 1280 1024"><defs><radialGradient id="gHat" cx="0.4" cy="0.3" r="0.8"><stop offset="0" stop-color="#ff5a4a"/><stop offset="1" stop-color="#c00000"/></radialGradient><radialGradient id="gGlobe" cx="0.35" cy="0.3" r="0.8"><stop offset="0" stop-color="#6cc0ff"/><stop offset="0.6" stop-color="#1d6fd0"/><stop offset="1" stop-color="#0a3a90"/></radialGradient><radialGradient id="gSmile" cx="0.4" cy="0.3" r="0.8"><stop offset="0" stop-color="#fff6a0"/><stop offset="0.6" stop-color="#f5d020"/><stop offset="1" stop-color="#c89000"/></radialGradient><linearGradient id="gX" x1="0" y1="0" x2="0" y2="1"><stop offset="0" stop-color="#ffd000"/><stop offset="0.5" stop-color="#ff9000"/><stop offset="1" stop-color="#ff3000"/></linearGradient><linearGradient id="gJE" x1="0" y1="0" x2="0" y2="1"><stop offset="0" stop-color="#ffe0b0"/><stop offset="0.45" stop-color="#ffb040"/><stop offset="1" stop-color="#ff8000"/></linearGradient><linearGradient id="gBub" x1="0" y1="0" x2="1" y2="1"><stop offset="0" stop-color="#ffffff"/><stop offset="1" stop-color="#90b0d8"/></linearGradient><linearGradient id="gScr" x1="0" y1="0" x2="1" y2="1"><stop offset="0" stop-color="#0c2a68"/><stop offset="1" stop-color="#234a90"/></linearGradient></defs><ellipse cx="26" cy="1004" rx="21" ry="8" transform="rotate(18 26 1004)" fill="url(#gHat)" stroke="#200" stroke-width="1"/><path d="M16 999 Q17 985 25 984.5 Q31 984 35 985 Q39 988 40 999 Q30 1004 16 999 Z" fill="url(#gHat)" stroke="#200" stroke-width="1"/><path d="M15.5 996 Q28 1002 40 997 L40.5 1000.5 Q28 1006 15.5 999.5 Z" fill="#1a1a1a"/><path d="M40 983.5 L43.5 977 L47.5 983.5 Z" fill="#fff" stroke="#000" stroke-width="1"/><circle cx="73" cy="993" r="15.5" fill="url(#gGlobe)" stroke="#0a2050" stroke-width="0.8"/><path d="M60 984 Q67 978 76 980 Q82 984 78 989 Q72 988 71 994 Q67 999 62 996 Q58 990 60 984 Z" fill="#8fd08a" opacity="0.9"/><path d="M66 998 Q70 996 73 1000 Q72 1005 68 1004 Z" fill="#8fd08a" opacity="0.8"/><path d="M53 986 Q50 994 72 996 Q90 997 93 991" fill="none" stroke="#333" stroke-width="3.8" stroke-linecap="round"/><path d="M53 986 Q50 994 72 996 Q90 997 93 991" fill="none" stroke="#b0b0b0" stroke-width="2" stroke-linecap="round"/><path d="M53 986 Q54 982 58 981" fill="none" stroke="#333" stroke-width="3.8" stroke-linecap="round"/><path d="M53 986 Q54 982 58 981" fill="none" stroke="#b0b0b0" stroke-width="2" stroke-linecap="round"/><ellipse cx="82" cy="1006" rx="10.5" ry="8" transform="rotate(-25 82 1006)" fill="#f4f4f4" stroke="#222" stroke-width="1"/><path d="M74 1006 Q80 1010 90 1003" fill="none" stroke="#8a8ab0" stroke-width="1.5"/><ellipse cx="82" cy="1000.5" rx="2.6" ry="1.8" fill="#6a70c0"/><path d="M101 988 L125 981.5 L145 1000 L122 1011.5 Z" fill="#d4d4d4" stroke="#333" stroke-width="1"/><path d="M106 988 L124 983.5 L128.5 987.5 L110 992 Z" fill="#7ec08a"/><path d="M112 994 L130 989 M115 997.5 L133 992.5 M118 1001 L136 996 M121 1004.5 L139 999.5" stroke="#fff" stroke-width="1.6" stroke-dasharray="2.5 1.5"/><path d="M155 980 Q164 976 175 977 Q181 980 180 990 Q176 995 166 995 L162 1002 L160 995 Q152 993 152 987 Q152 982 155 980 Z" fill="url(#gBub)" stroke="#334" stroke-width="0.8"/><path d="M165.5 981 L166 991 M166 993 L166 994" stroke="#2a4a7a" stroke-width="2.6"/><circle cx="177" cy="1004" r="12.3" fill="url(#gSmile)" stroke="#5a4000" stroke-width="0.8"/><ellipse cx="173.5" cy="1000" rx="2.8" ry="3.5" fill="#fff" stroke="#222" stroke-width="0.8"/><ellipse cx="180.5" cy="999.5" rx="2.8" ry="3.5" fill="#fff" stroke="#222" stroke-width="0.8"/><circle cx="174" cy="999" r="1.3" fill="#000"/><circle cx="181" cy="998.5" r="1.3" fill="#000"/><path d="M170 1006 Q177 1013 186 1004 Q184 1012 176 1012 Q171 1011 170 1006 Z" fill="#c01010" stroke="#222" stroke-width="0.8"/><g transform="translate(200,977) scale(1.0)"><path d="M1 7 L37 0 L38 30 L2 40 Z" fill="#f0f0f0" stroke="#222" stroke-width="1.2"/><path d="M6.5 9.5 L33.5 4 L34 26.5 L7 33.5 Z" fill="url(#gScr)"/><path d="M10 13.5 L13.5 15.5 L10 17.5 M15 18 L19.5 17" stroke="#fff" stroke-width="1.6" fill="none"/></g><path d="M249 980 L283 1012 M283 980 L249 1012" stroke="#000" stroke-width="9" stroke-linecap="round"/><path d="M249 980 L283 1012 M283 980 L249 1012" stroke="url(#gX)" stroke-width="6" stroke-linecap="round"/><text x="244" y="1007" font-family="Liberation Sans" font-weight="bold" font-size="13" fill="#eee" stroke="#000" stroke-width="1.6" paint-order="stroke" letter-spacing="-0.3" textLength="46" lengthAdjust="spacingAndGlyphs">chat</text><circle cx="306" cy="979.5" r="4.8" fill="url(#gJE)" stroke="#d06000" stroke-width="0.6"/><path d="M302 986 H311 V1008 Q311 1017 302 1017.5 L297.5 1017.5 L298 1010 Q302 1010 302 1006 Z" fill="url(#gJE)" stroke="#d06000" stroke-width="0.6"/><path d="M334 978 Q316 976 314 996 Q316 1016 334 1014 L334 1006 Q323 1008 322 1000 H333 V992 H322 Q323 985 334 986 Z" fill="url(#gJE)" stroke="#d06000" stroke-width="0.6"/><path d="M342 990 L348 985 M342 995 L348 990 M342 1000 L348 995 M342 1005 L348 1000 M342 1010 L348 1005" stroke="#8a8a8a" stroke-width="0.8" stroke-dasharray="1 1"/></svg>
<div class="a" style="left:350px;top:974px;width:240px;height:23px;background:#e8e8e8;border:1px solid #555;box-shadow:inset 1px 1px 0 #fff, inset -1px -1px 0 #b8b8b8"></div>
<div class="a" style="left:350px;top:997px;width:240px;height:23px;background:#cccccc;border:1px solid #555;box-shadow:inset 1px 1px 0 #9a9a9a, inset -1px -1px 0 #fff"></div>
<div class="a" style="left:370px;top:975px;width:215px;height:20px;text-align:center;font-size:13.2px;line-height:20px;color:#000;white-space:nowrap">jEdit - JaMonServer.java</div>
<div class="a" style="left:370px;top:998px;width:215px;height:20px;text-align:center;font-size:13.2px;line-height:20px;color:#000;white-space:nowrap">Console</div>
<svg style="left:354px;top:977px" width="16" height="17" viewBox="0 0 16 17"><rect x="0" y="0" width="16" height="17" fill="#fff"/><path d="M4 2 V3 M4 5 V12 Q4 15 1.5 15" stroke="#6a78c8" stroke-width="1.6" fill="none"/><path d="M8 3 H13 L10 7.5 Q13.5 8 13.5 11 Q13 14.5 8 14" stroke="#6a78c8" stroke-width="1.6" fill="none"/></svg>
<svg style="left:354px;top:1000px" width="16" height="17" viewBox="0 0 16 17"><rect x="0" y="0" width="16" height="17" fill="#fff"/><path d="M4 2 V3 M4 5 V12 Q4 15 1.5 15" stroke="#6a78c8" stroke-width="1.6" fill="none"/><path d="M8 3 H13 L10 7.5 Q13.5 8 13.5 11 Q13 14.5 8 14" stroke="#6a78c8" stroke-width="1.6" fill="none"/></svg>
<div class="a" style="left:1115px;top:974px;width:57px;height:46px;background:#e6e6e6;border:1px solid #9a9a9a"></div>
<div class="a" style="left:1117px;top:976px;width:26px;height:20px;background:#a8a8a8"></div>
<div class="a" style="left:1144px;top:976px;width:26px;height:20px;background:#3c4e78"></div>
<div class="a" style="left:1117px;top:998px;width:26px;height:20px;background:#a8a8a8"></div>
<div class="a" style="left:1144px;top:998px;width:26px;height:20px;background:#a8a8a8"></div>
<svg style="left:0;top:0" width="1280" height="1024" viewBox="0 0 1280 1024"><rect x="1126" y="977.8" width="13.5" height="15.5" fill="#fff" stroke="#000" stroke-width="1.3"/><rect x="1117.8" y="976.8" width="18.5" height="13.5" fill="#e6e6e6" stroke="#000" stroke-width="1.3"/><rect x="1118.6" y="992.6" width="4" height="2" fill="#fff" stroke="#000" stroke-width="1.1"/><rect x="1146" y="977.6" width="20.5" height="13.8" fill="#e6e6e6" stroke="#000" stroke-width="1.4"/><rect x="1154.5" y="983" width="13" height="9.5" fill="#4664b0" stroke="#fff" stroke-width="1.2"/></svg>
<svg style="left:0;top:0" width="1280" height="1024" viewBox="0 0 1280 1024"><defs><linearGradient id="gSpk" x1="0" y1="0" x2="1" y2="0"><stop offset="0" stop-color="#e8e8e8"/><stop offset="1" stop-color="#a0a0a0"/></linearGradient></defs><path d="M1177.5 994.2 H1180.5 L1185 990 V1005 L1180.5 1000.8 H1177.5 Z" fill="url(#gSpk)" stroke="#333" stroke-width="0.9" stroke-linejoin="round"/><path d="M1185 990.3 V1004.7" stroke="#222" stroke-width="1.8"/><path d="M1188.3 993.3 Q1191.5 997.5 1188.3 1001.2 M1189.8 991 Q1194.8 997.5 1189.8 1003.4 M1192.2 988.8 Q1198.2 997.5 1192.2 1005.3" fill="none" stroke="#2a2a2a" stroke-width="1.1" stroke-linecap="round"/></svg>
<div class="a" style="left:1198px;top:980px;width:70px;text-align:center;font-size:13.2px;line-height:17px;color:#000;white-space:nowrap">Fri Mar 19<br>8:45 PM</div>
</body></html>
